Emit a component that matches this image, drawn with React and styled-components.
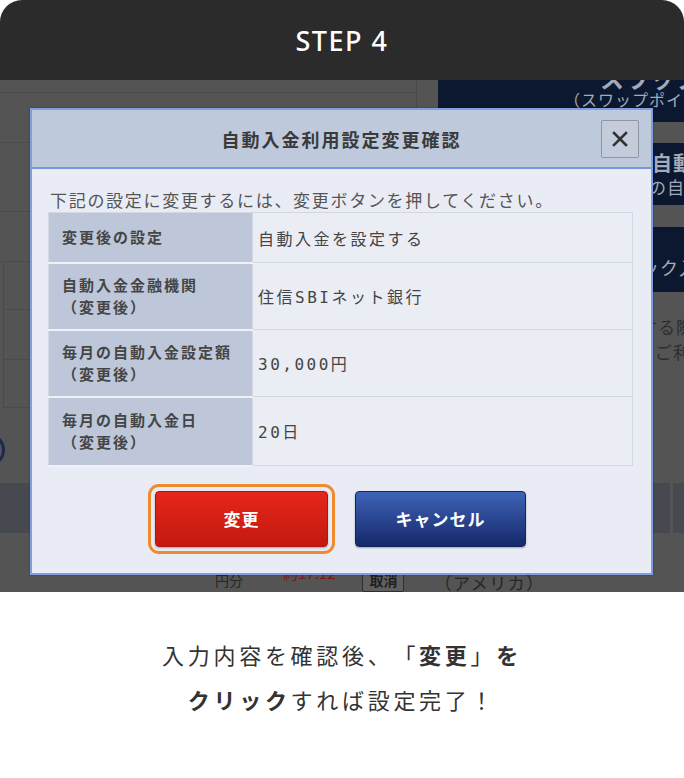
import React from "react";
import styled, { createGlobalStyle } from "styled-components";

const GlobalStyle = createGlobalStyle`
  html, body { margin: 0; padding: 0; background: #ffffff; }
  body { font-family: "Noto Sans CJK JP", "Noto Sans", sans-serif; }
  * { box-sizing: border-box; }
`;

const JP = `"Noto Sans CJK JP", "Noto Sans", sans-serif`;
const MONO = `"DejaVu Sans Mono", "Noto Sans CJK JP", monospace`;

const Card = styled.div`
  width: 684px;
  height: 778px;
  background: #ffffff;
  display: flex;
  flex-direction: column;
`;

const StepBar = styled.header`
  height: 80px;
  flex: none;
  background: #2b2b2b;
  border-radius: 22px 22px 0 0;
  display: flex;
  align-items: center;
  justify-content: center;
  color: #ffffff;
  font-family: "Noto Sans", sans-serif;
  font-size: 27px;
  font-weight: 500;
  letter-spacing: 1.5px;
`;

/* ---------- dimmed page behind the dialog ---------- */

const Shot = styled.div`
  position: relative;
  height: 512px;
  flex: none;
  overflow: hidden;
  background: #545454;
  display: flex;
  flex-direction: column;
`;

const Upper = styled.div`
  height: 403px;
  flex: none;
  display: flex;
`;

const LeftPane = styled.div`
  width: 438px;
  flex: none;
  display: flex;
  flex-direction: column;
`;

const PageRow = styled.div`
  height: ${(p) => p.$h}px;
  flex: none;
  width: 417px;
  border-bottom: 1px solid #4a4a4a;
  border-right: 1px solid #4a4a4a;
  border-left: ${(p) => (p.$inset ? "1px solid #4a4a4a" : "none")};
  margin-left: ${(p) => (p.$inset ? 3 : 0)}px;
`;

const IconRow = styled.div`
  flex: 1;
  display: flex;
  align-items: center;
  padding-top: 8px;
`;

const RoundIcon = styled.div`
  width: 34px;
  height: 34px;
  margin-left: -29px;
  border-radius: 50%;
  border: 3px solid #1c2a50;
`;

const RightPane = styled.div`
  flex: 1;
  min-width: 0;
  overflow: hidden;
  display: flex;
  flex-direction: column;
`;

const NavyBlock = styled.div`
  height: ${(p) => p.$h}px;
  flex: none;
  background: #0c1830;
  padding-top: ${(p) => p.$pt || 0}px;
  overflow: hidden;
  display: flex;
  flex-direction: column;
`;

const PaneGap = styled.div`
  height: ${(p) => p.$h}px;
  flex: none;
`;

const PaneLine = styled.div`
  white-space: nowrap;
  padding-left: ${(p) => p.$indent}px;
  margin-top: ${(p) => p.$mt || 0}px;
  font-family: ${JP};
  font-size: ${(p) => p.$size}px;
  line-height: ${(p) => p.$lh || 24}px;
  font-weight: ${(p) => (p.$bold ? 700 : 400)};
  color: ${(p) => p.$color || "#a4aab8"};
  letter-spacing: 1px;
`;

const PaneText = styled.div`
  padding-top: 22px;
  display: flex;
  flex-direction: column;
`;

const Band = styled.div`
  height: 50px;
  flex: none;
  display: flex;
  gap: 3px;
`;

const BandCell = styled.div`
  flex: ${(p) => (p.$w ? "none" : 1)};
  width: ${(p) => (p.$w ? `${p.$w}px` : "auto")};
  background: #46494f;
`;

const BottomRow = styled.div`
  flex: 1;
  display: flex;
  align-items: center;
  padding: 31px 0 0 215px;
  font-family: ${JP};
  color: #262626;
`;

const Unit = styled.span`
  font-size: 14px;
`;

const RedNote = styled.span`
  margin-left: 40px;
  align-self: flex-start;
  margin-top: -2px;
  font-size: 15px;
  line-height: 22px;
  color: #7c1818;
`;

const TagButton = styled.span`
  margin-left: 27px;
  width: 42px;
  height: 25px;
  display: flex;
  align-items: center;
  justify-content: center;
  border: 1px solid #2e2e2e;
  border-radius: 2px;
  background: #5f5f5f;
  font-size: 14px;
  font-weight: 700;
  color: #1f1f1f;
`;

const Country = styled.span`
  margin-left: 30px;
  font-size: 17px;
  letter-spacing: 1.5px;
  margin-top: 6px;
`;

/* ---------- dialog ---------- */

const Dialog = styled.div`
  position: absolute;
  left: 30px;
  top: 28px;
  width: 623px;
  height: 467px;
  border: 2px solid #809ee0;
  background: #e9ecf4;
  display: flex;
  flex-direction: column;
  box-shadow: 0 0 2px rgba(0, 0, 0, 0.3);
`;

const DialogHead = styled.div`
  height: 59px;
  flex: none;
  background: #bec9db;
  border-bottom: 2px solid #7896da;
  display: grid;
  grid-template-columns: 1fr auto 1fr;
  align-items: center;
`;

const DialogTitle = styled.h2`
  grid-column: 2;
  margin: 0;
  font-family: ${JP};
  font-size: 18px;
  font-weight: 700;
  letter-spacing: 2px;
  color: #3a3a3a;
`;

const CloseButton = styled.button`
  grid-column: 3;
  justify-self: end;
  margin-right: 12px;
  width: 38px;
  height: 38px;
  padding: 0;
  display: flex;
  align-items: center;
  justify-content: center;
  background: #c4ccdb;
  border: 1px solid #8f97a5;
  border-radius: 2px;
`;

const DialogBody = styled.div`
  flex: 1;
  padding: 19px 18px 0 16px;
  display: flex;
  flex-direction: column;
`;

const Intro = styled.p`
  margin: 0;
  padding-left: 2px;
  font-family: ${JP};
  font-size: 17px;
  line-height: 24px;
  letter-spacing: 1.7px;
  color: #555555;
  white-space: nowrap;
`;

const Table = styled.table`
  width: 585px;
  border-collapse: collapse;
  border: 1px solid #d3d8e2;
`;

const Row = styled.tr`
  height: ${(p) => p.$h}px;
`;

const Label = styled.th`
  width: 204px;
  padding: 0 0 0 13px;
  background: #bdc7d9;
  border-bottom: 2px solid #eef1f7;
  text-align: left;
  font-family: ${JP};
  font-size: 15px;
  line-height: 22px;
  font-weight: 700;
  letter-spacing: 2px;
  color: #454545;
`;

const Value = styled.td`
  padding: 0 0 0 5px;
  background: #eaedf4;
  border: 1px solid #d2d7e1;
  font-family: ${MONO};
  font-size: 16px;
  letter-spacing: 2.5px;
  color: #444444;
`;

const Actions = styled.div`
  margin-top: 24px;
  display: flex;
  justify-content: center;
  gap: 27px;
`;

const ActionButton = styled.button`
  width: ${(p) => p.$w}px;
  height: 56px;
  border-radius: 4px;
  font-family: ${JP};
  font-size: 17px;
  font-weight: 700;
  letter-spacing: 1px;
  color: #ffffff;
  box-shadow: 0 1px 2px rgba(0, 0, 0, 0.3);
  background: ${(p) =>
    p.$tone === "red"
      ? "linear-gradient(#e6261c, #c3190f)"
      : "linear-gradient(#3e63b7, #15286a)"};
  border: 1px solid ${(p) => (p.$tone === "red" ? "#b0160f" : "#14245c")};
  outline: ${(p) => (p.$focus ? "3px solid #ef8b2d" : "none")};
  outline-offset: 4px;
`;

/* ---------- caption ---------- */

const Caption = styled.p`
  margin: 40px 0 0;
  text-align: center;
  font-family: ${JP};
  font-size: 22px;
  line-height: 45px;
  letter-spacing: 3.7px;
  color: #333333;
  text-spacing-trim: space-all;
`;

const Strong = styled.b`
  font-weight: 700;
`;

const CloseIcon = () => (
  <svg width="16" height="16" viewBox="0 0 16 16">
    <path d="M2 2 L14 14 M14 2 L2 14" stroke="#333" strokeWidth="2.6" strokeLinecap="square" />
  </svg>
);

const rows = [
  { h: 50, label: ["変更後の設定"], value: "自動入金を設定する" },
  { h: 67, label: ["自動入金金融機関", "（変更後）"], value: "住信SBIネット銀行" },
  { h: 67, label: ["毎月の自動入金設定額", "（変更後）"], value: "30,000円" },
  { h: 69, label: ["毎月の自動入金日", "（変更後）"], value: "20日" },
];

export default function App() {
  return (
    <>
      <GlobalStyle />
      <Card>
        <StepBar>STEP 4</StepBar>

        <Shot>
          <Upper>
            <LeftPane>
              <PageRow $h={13} />
              <PageRow $h={50} />
              <PageRow $h={69} />
              <PageRow $h={50} />
              <PageRow $h={48} $inset />
              <PageRow $h={50} $inset />
              <PageRow $h={48} $inset />
              <IconRow>
                <RoundIcon />
              </IconRow>
            </LeftPane>
            <RightPane>
              <NavyBlock $h={42}>
                <PaneLine $indent={162} $size={24} $bold $mt={-14}>
                  スワップポイント
                </PaneLine>
                <PaneLine $indent={126} $size={16} $lh={20} $mt={-1}>
                  （スワップポイント再投資）
                </PaneLine>
              </NavyBlock>
              <PaneGap $h={21} />
              <NavyBlock $h={62} $pt={8}>
                <PaneLine $indent={214} $size={20} $bold>
                  自動入金設定
                </PaneLine>
                <PaneLine $indent={175} $size={17}>
                  毎月の自動入金
                </PaneLine>
              </NavyBlock>
              <PaneGap $h={22} />
              <NavyBlock $h={65} $pt={28}>
                <PaneLine $indent={165} $size={18}>
                  クイック入金
                </PaneLine>
              </NavyBlock>
              <PaneText>
                <PaneLine $indent={166} $size={17} $lh={25} $color="#2e2e2e">
                  入金する際
                </PaneLine>
                <PaneLine $indent={217} $size={17} $lh={25} $color="#2e2e2e">
                  ご利用の際
                </PaneLine>
              </PaneText>
            </RightPane>
          </Upper>
          <Band>
            <BandCell $w={670} />
            <BandCell />
          </Band>
          <BottomRow>
            <Unit>円分</Unit>
            <RedNote>約17.12</RedNote>
            <TagButton>取消</TagButton>
            <Country>（アメリカ）</Country>
          </BottomRow>

          <Dialog>
            <DialogHead>
              <DialogTitle>自動入金利用設定変更確認</DialogTitle>
              <CloseButton aria-label="閉じる">
                <CloseIcon />
              </CloseButton>
            </DialogHead>
            <DialogBody>
              <Intro>下記の設定に変更するには、変更ボタンを押してください。</Intro>
              <Table>
                <tbody>
                  {rows.map((r) => (
                    <Row key={r.value} $h={r.h}>
                      <Label>
                        {r.label.map((l, i) => (
                          <div key={i}>{l}</div>
                        ))}
                      </Label>
                      <Value>{r.value}</Value>
                    </Row>
                  ))}
                </tbody>
              </Table>
              <Actions>
                <ActionButton $tone="red" $w={173} $focus>
                  変更
                </ActionButton>
                <ActionButton $tone="blue" $w={171}>
                  キャンセル
                </ActionButton>
              </Actions>
            </DialogBody>
          </Dialog>
        </Shot>

        <Caption>
          入力内容を確認後、「<Strong>変更</Strong>」<Strong>を</Strong>
          <br />
          <Strong>クリック</Strong>すれば設定完了！
        </Caption>
      </Card>
    </>
  );
}
